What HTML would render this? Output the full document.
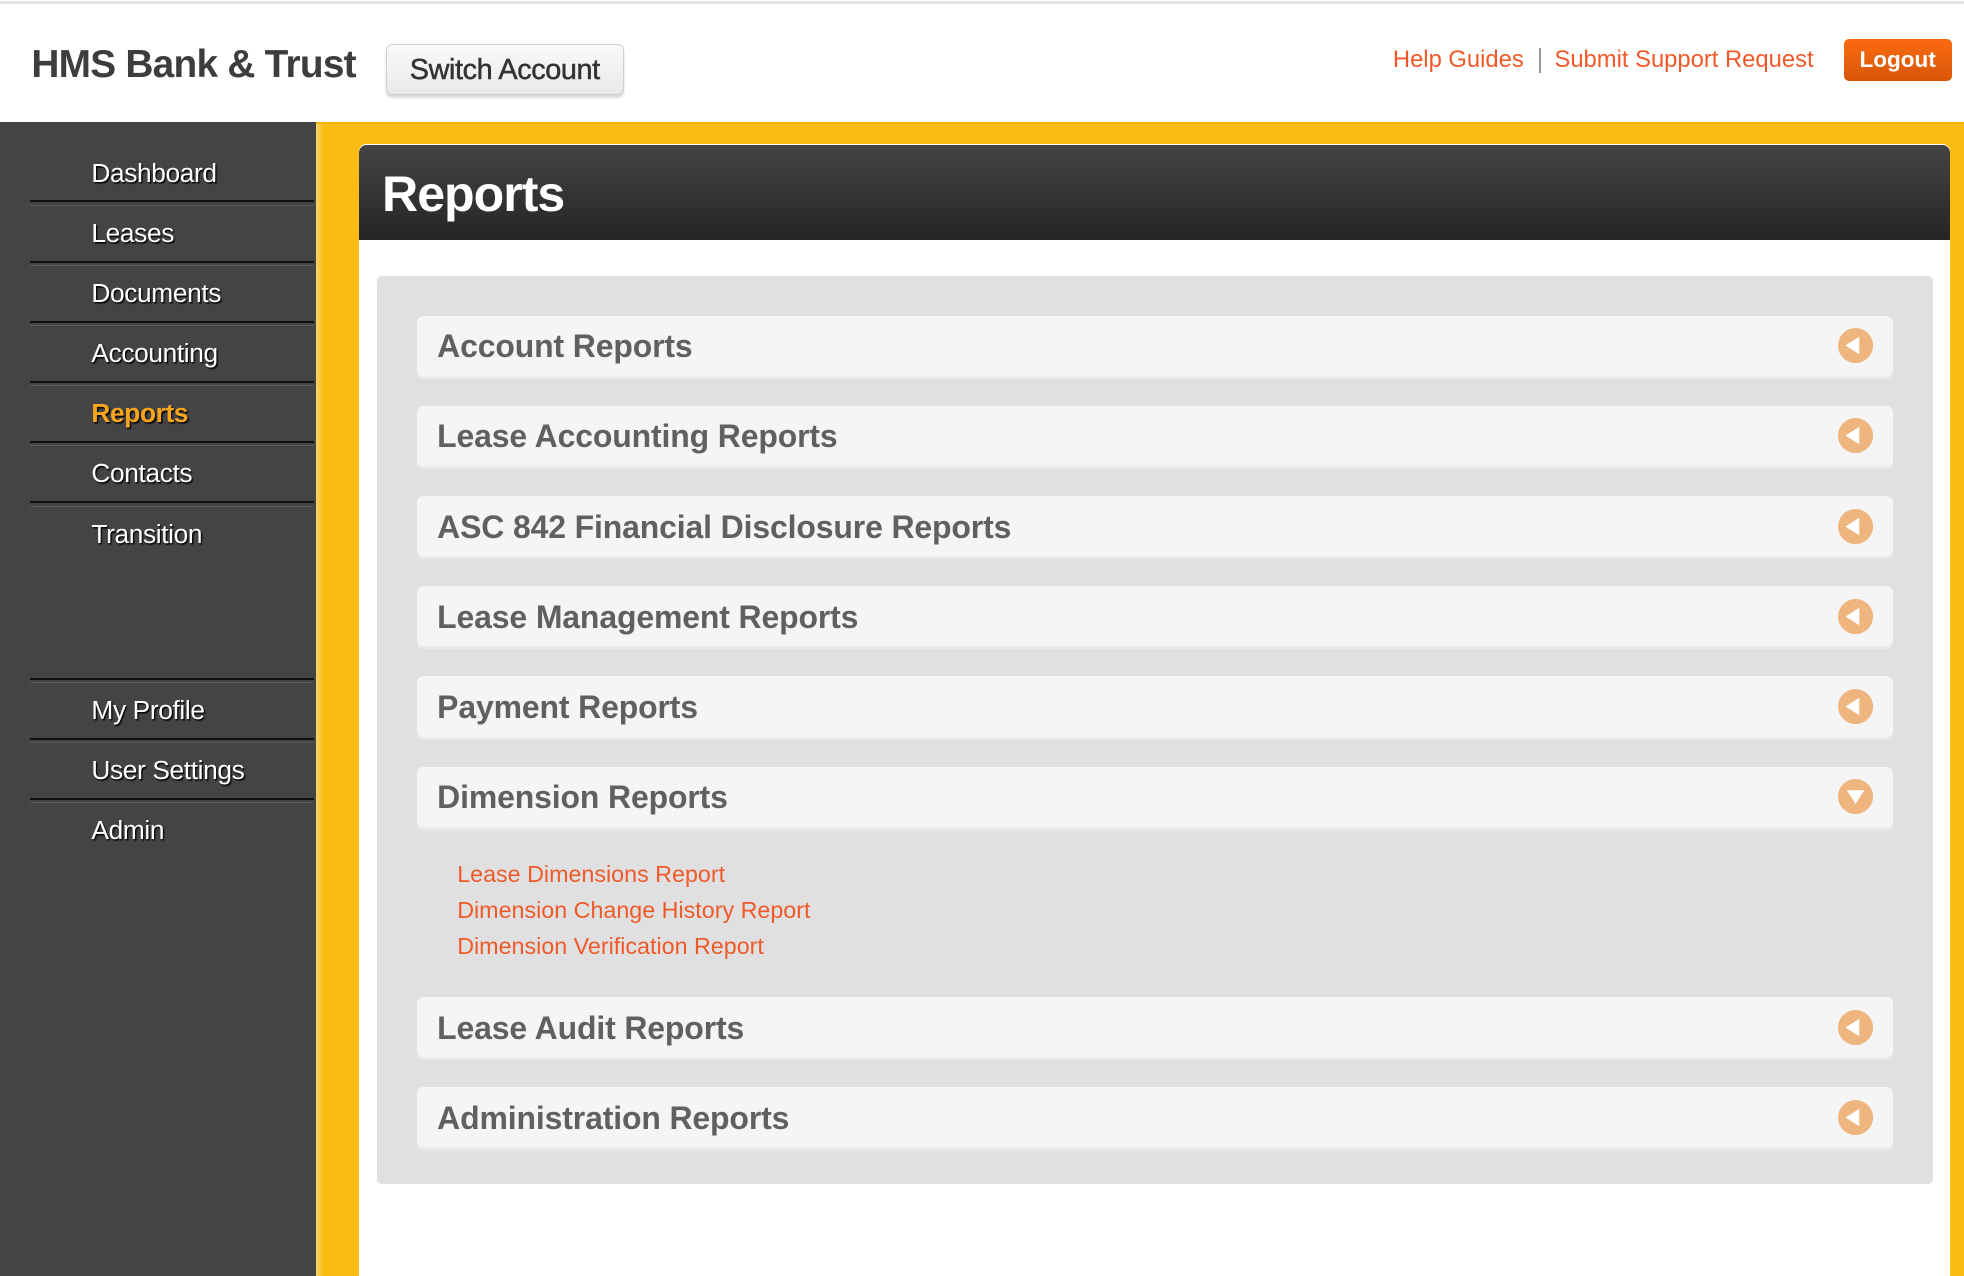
<!DOCTYPE html>
<html><head><meta charset="utf-8"><style>
html,body{margin:0;padding:0;width:1964px;height:1276px;overflow:hidden;background:#fff}
#w{zoom:1.2526;position:relative;width:1568px;height:1019px;font-family:"Liberation Sans",Arial,sans-serif}
.a{position:absolute}
.topline{left:0;top:1px;width:1568px;height:2px;background:#e4e4e4}
.logo{left:25px;top:34px;font-size:31px;font-weight:bold;color:#3d3d3d;letter-spacing:-.6px;white-space:nowrap}
.sw{left:308px;top:35px;width:190px;height:41px;box-sizing:border-box;border:1px solid #cfcfcf;border-radius:5px;background:linear-gradient(#fafafa,#e9e9e9);box-shadow:0 2px 2px rgba(0,0,0,.15);font-size:23px;color:#333;text-align:center;line-height:40px;letter-spacing:-.3px;-webkit-text-stroke:.4px #333}
.lk{top:37px;font-size:19px;color:#f05a2a;white-space:nowrap}
.sep{left:1229px;top:38px;width:1px;height:20px;background:#999}
.lo{left:1472px;top:31px;width:86px;height:34px;border-radius:4px;background:linear-gradient(#fb6a10,#d75708);color:#fff;font-weight:bold;font-size:18px;text-align:center;line-height:33px}
.side{left:0;top:97px;width:252px;height:922px;background:#444}
.yel{left:252px;top:97px;width:1316px;height:922px;background:#fbbd13;border-top:2px solid #f3b20a;box-sizing:border-box}
.yel:before{content:"";position:absolute;left:0;top:0;width:6px;height:100%;background:linear-gradient(90deg,#f8d57a,#fbbd13)}
.ni{left:24px;width:227px;height:48px;box-sizing:border-box}
.ni span{position:absolute;left:49px;top:12px;font-size:21px;color:#fff;text-shadow:1px 1px 1px #000;letter-spacing:-.3px;white-space:nowrap}
.ln{left:24px;width:227px;height:2px;border-top:2px solid #111;border-bottom:1px solid #5a5a5a}
.panel{left:287px;top:115px;width:1270px;height:904px;background:#fff;border-radius:6px 6px 0 0}
.ph{left:287px;top:116px;width:1270px;height:76px;background:linear-gradient(#444,#252525);border-radius:6px 6px 0 0}
.ph span{position:absolute;left:18px;top:16px;font-size:40px;font-weight:bold;color:#fff;letter-spacing:-.8px}
.gb{left:301px;top:220px;width:1242px;height:725px;background:#e0e0e0;border-radius:4px}
.ac{left:333px;width:1178px;height:48px;background:#f5f5f5;border-radius:5px;box-shadow:0 2px 1px #ebebeb}
.ac span{position:absolute;left:16px;top:10px;font-size:25.5px;font-weight:bold;color:#606060;letter-spacing:-.1px;white-space:nowrap}
.ac svg{position:absolute;left:1134px;top:10px}
.sub{left:365px;font-size:18.6px;color:#f05a2a;white-space:nowrap}
</style></head><body><div id="w">
<div class="a topline"></div>
<div class="a logo">HMS Bank &amp; Trust</div>
<div class="a sw">Switch Account</div>
<div class="a lk" style="left:1112px">Help Guides</div>
<div class="a sep"></div>
<div class="a lk" style="left:1241px">Submit Support Request</div>
<div class="a lo">Logout</div>
<div class="a side"></div>
<div class="a yel"></div>
<div class="a ni" style="top:114px"><span>Dashboard</span></div>
<div class="a ln" style="top:160px"></div>
<div class="a ni" style="top:162px"><span>Leases</span></div>
<div class="a ln" style="top:208px"></div>
<div class="a ni" style="top:210px"><span>Documents</span></div>
<div class="a ln" style="top:256px"></div>
<div class="a ni" style="top:258px"><span>Accounting</span></div>
<div class="a ln" style="top:304px"></div>
<div class="a ni" style="top:306px"><span style="color:#f9a51f;font-weight:bold">Reports</span></div>
<div class="a ln" style="top:352px"></div>
<div class="a ni" style="top:354px"><span>Contacts</span></div>
<div class="a ln" style="top:400px"></div>
<div class="a ni" style="top:402px"><span>Transition</span></div>
<div class="a ln" style="top:541px"></div>
<div class="a ni" style="top:543px"><span>My Profile</span></div>
<div class="a ln" style="top:589px"></div>
<div class="a ni" style="top:591px"><span>User Settings</span></div>
<div class="a ln" style="top:637px"></div>
<div class="a ni" style="top:639px"><span>Admin</span></div>
<div class="a panel"></div>
<div class="a ph"><span>Reports</span></div>
<div class="a gb"></div>
<div class="a ac" style="top:252px"><span>Account Reports</span><svg width="28" height="28"><circle cx="14" cy="14" r="14" fill="#efb57f"/><path d="M6 14L17 7V21Z" fill="#fff"/></svg></div>
<div class="a ac" style="top:324px"><span>Lease Accounting Reports</span><svg width="28" height="28"><circle cx="14" cy="14" r="14" fill="#efb57f"/><path d="M6 14L17 7V21Z" fill="#fff"/></svg></div>
<div class="a ac" style="top:396px"><span>ASC 842 Financial Disclosure Reports</span><svg width="28" height="28"><circle cx="14" cy="14" r="14" fill="#efb57f"/><path d="M6 14L17 7V21Z" fill="#fff"/></svg></div>
<div class="a ac" style="top:468px"><span>Lease Management Reports</span><svg width="28" height="28"><circle cx="14" cy="14" r="14" fill="#efb57f"/><path d="M6 14L17 7V21Z" fill="#fff"/></svg></div>
<div class="a ac" style="top:540px"><span>Payment Reports</span><svg width="28" height="28"><circle cx="14" cy="14" r="14" fill="#efb57f"/><path d="M6 14L17 7V21Z" fill="#fff"/></svg></div>
<div class="a ac" style="top:612px"><span>Dimension Reports</span><svg width="28" height="28"><circle cx="14" cy="14" r="14" fill="#efb57f"/><path d="M7 9H21L14 20Z" fill="#fff"/></svg></div>
<div class="a sub" style="top:687px">Lease Dimensions Report</div>
<div class="a sub" style="top:716px">Dimension Change History Report</div>
<div class="a sub" style="top:745px">Dimension Verification Report</div>
<div class="a ac" style="top:796px"><span>Lease Audit Reports</span><svg width="28" height="28"><circle cx="14" cy="14" r="14" fill="#efb57f"/><path d="M6 14L17 7V21Z" fill="#fff"/></svg></div>
<div class="a ac" style="top:868px"><span>Administration Reports</span><svg width="28" height="28"><circle cx="14" cy="14" r="14" fill="#efb57f"/><path d="M6 14L17 7V21Z" fill="#fff"/></svg></div>
</div></body></html>
